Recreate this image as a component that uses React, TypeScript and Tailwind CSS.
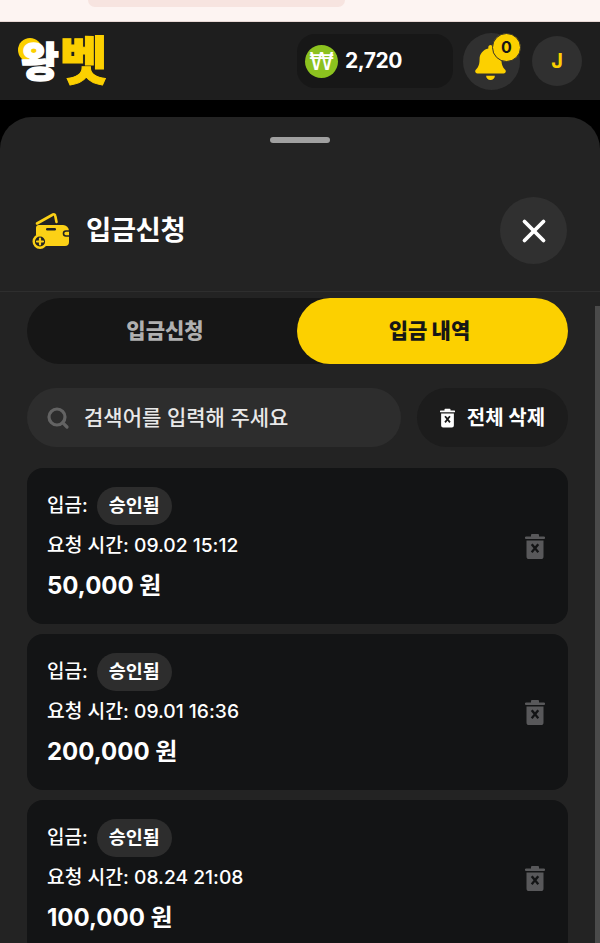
import { Search, X } from "lucide-react";
import { FaBell } from "react-icons/fa";

type Deposit = {
  time: string;
  amount: string;
};

const DEPOSITS: Deposit[] = [
  { time: "09.02 15:12", amount: "50,000 원" },
  { time: "09.01 16:36", amount: "200,000 원" },
  { time: "08.24 21:08", amount: "100,000 원" },
];

function TrashIcon({ className }: { className?: string }) {
  return (
    <svg viewBox="0 0 20 26" className={className} fill="currentColor" aria-hidden="true">
      <path d="M7 0.5h6a1 1 0 0 1 1 1V3h5a1 1 0 0 1 0 2.4H1A1 1 0 0 1 1 3h5V1.5a1 1 0 0 1 1-1z" />
      <path
        fillRule="evenodd"
        d="M1.5 7h17v16a2.600 2.600 0 0 1-2.600 2.600H4.100A2.600 2.600 0 0 1 1.500 23V7zM5.800 11.400l2.700 3.300-2.700 3.300 1.800 1.500 2.400-2.900 2.400 2.900 1.800-1.500-2.700-3.300 2.700-3.300-1.800-1.500-2.400 2.900-2.400-2.900z"
      />
    </svg>
  );
}

function WalletIcon() {
  return (
    <svg viewBox="0 0 38 37" className="h-[37px] w-[38px]" aria-hidden="true">
      <path
        d="M5 11.500 L21 2.500 Q23 1.800 23.300 4 L24.500 10"
        fill="none"
        stroke="#fcd116"
        strokeWidth="2.600"
        strokeLinecap="round"
        strokeLinejoin="round"
      />
      <path d="M7 13h24a6 6 0 0 1 6 6V30a4 4 0 0 1-4 4H14a11 11 0 0 0-10-11V16a3 3 0 0 1 3-3z" fill="#fcd116" />
      <rect x="14" y="16" width="10" height="2.400" rx="1.200" fill="#232323" />
      <path d="M37 19h-3a2.500 2.500 0 0 0 0 5h3" fill="#fcd116" stroke="#232323" strokeWidth="1.600" />
      <circle cx="8" cy="29.500" r="6.300" fill="#232323" stroke="#fcd116" strokeWidth="2.400" />
      <path d="M8 26.500v6M5 29.500h6" stroke="#fcd116" strokeWidth="2.200" strokeLinecap="round" />
    </svg>
  );
}

function DepositCard({ item }: { item: Deposit }) {
  return (
    <div className="flex h-[156px] shrink-0 items-center justify-between rounded-2xl bg-[#131415] pl-5 pr-[23px]">
      <div className="text-white">
        <div className="flex items-center gap-[9px]">
          <span className="text-[19px] font-medium leading-none">입금:</span>
          <span className="flex h-[38px] items-center rounded-full bg-[#2d2d2d] px-3 text-[18.500px] font-bold">
            승인됨
          </span>
        </div>
        <p className="mt-[5px] text-[19.250px] font-medium leading-[30px]">요청 시간: {item.time}</p>
        <p className="mt-[6px] text-[24px] font-bold leading-[40px]">{item.amount}</p>
      </div>
      <TrashIcon className="h-[27px] w-[20px] text-[#58585a]" />
    </div>
  );
}

export default function App() {
  return (
    <div
      className="relative flex h-[943px] w-[600px] flex-col overflow-hidden bg-black"
      style={{ fontFamily: 'Inter, "Noto Sans CJK KR", sans-serif' }}
    >
      {/* browser strip above the app */}
      <div className="h-[22px] shrink-0 border-b border-[#e8d8d4] bg-[#fdf4f2] pl-[88px]">
        <div className="h-[7px] w-[257px] rounded-b-2xl bg-[#f7e4e0]" />
      </div>

      <header className="flex h-[78px] shrink-0 items-center bg-[#1e1e1e] pl-[18px] pr-[18px]">
        <div className="relative mt-[2px] flex items-center font-black leading-none tracking-[-2px]">
          <span className="absolute left-0 top-[2px] h-[24px] w-[24px] rounded-full bg-[#fcd000]" />
          <span className="relative ml-[3px] text-[41px] text-white [-webkit-text-stroke:1.500px_white]">왕</span>
          <span className="relative ml-[3px] text-[52px] text-[#fcd000] [-webkit-text-stroke:1px_#fcd000]">벳</span>
        </div>

        <div className="ml-auto flex h-[54px] w-[156px] items-center gap-[7px] rounded-[18px] bg-[#171717] pl-2">
          <span className="flex h-[33px] w-[33px] items-center justify-center rounded-full bg-[#8cc21f] text-[25px] leading-none text-white [font-family:'DejaVu_Sans',sans-serif]">
            ₩
          </span>
          <span className="text-[21px] font-bold tracking-[-0.5px] text-white">2,720</span>
        </div>

        <button
          type="button"
          className="relative ml-[10px] flex h-[57px] w-[57px] items-center justify-center rounded-full bg-[#303030]"
        >
          <FaBell className="mr-[3px] mt-[3px] h-[35px] w-[35px] text-[#fcd000]" />
          <span className="absolute right-[-1px] top-0 flex h-[29px] w-[29px] items-center justify-center rounded-full border border-[#33302a] bg-[#fcd000] text-[16px] font-bold text-[#161616]">
            0
          </span>
        </button>

        <div className="ml-3 flex h-[50px] w-[50px] items-center justify-center rounded-full bg-[#303030] text-[20px] font-bold text-[#fcd000]">
          J
        </div>
      </header>

      <section className="mt-[17px] flex min-h-0 flex-1 flex-col rounded-t-[32px] bg-[#232323]">
        <div className="mx-auto mt-5 h-[6px] w-[60px] shrink-0 rounded-full bg-[#a0a0a0]" />

        <div className="flex h-[149px] shrink-0 items-center justify-between border-b border-[#2e2e2e] pb-[3px] pl-[32px] pr-[33px] pt-[30px]">
          <div className="flex items-center gap-[16px]">
            <WalletIcon />
            <h1 className="text-[27.500px] font-bold tracking-[-0.5px] text-white">입금신청</h1>
          </div>
          <button
            type="button"
            className="flex h-[67px] w-[67px] items-center justify-center rounded-full bg-[#303030] text-white"
          >
            <X className="h-[38px] w-[38px]" strokeWidth={2.4} />
          </button>
        </div>

        <div className="flex min-h-0 flex-1 flex-col px-[27px] pr-[32px] pt-[6px]">
          <div className="flex h-[66px] shrink-0 rounded-full bg-[#161616] text-[21px] font-black">
            <button type="button" className="flex-1 pl-[6px] text-[#b0b0b0]">
              입금신청
            </button>
            <button type="button" className="w-[271px] rounded-full bg-[#fcd000] pr-[6px] text-[#161616]">
              입금 내역
            </button>
          </div>

          <div className="mt-6 flex h-[59px] shrink-0 gap-4">
            <div className="flex flex-1 items-center gap-[14px] rounded-full bg-[#2d2d2d] pl-[19px]">
              <Search className="h-[24px] w-[24px] text-[#636363]" strokeWidth={3.2} />
              <span className="text-[21px] font-medium text-[#e8e8e8]">검색어를 입력해 주세요</span>
            </div>
            <button
              type="button"
              className="flex w-[151px] items-center justify-center gap-[12px] rounded-full bg-[#1c1c1c] text-[20px] font-bold text-white"
            >
              <TrashIcon className="h-[20px] w-[15px]" />
              전체 삭제
            </button>
          </div>

          <div className="mt-[21px] flex flex-col gap-[10px]">
            {DEPOSITS.map((item) => (
              <DepositCard key={item.time} item={item} />
            ))}
          </div>
        </div>
      </section>

      {/* scrollbar thumb */}
      <div className="absolute bottom-0 right-0 top-[306px] w-[5px] bg-[#4a4a4a]" />
    </div>
  );
}
